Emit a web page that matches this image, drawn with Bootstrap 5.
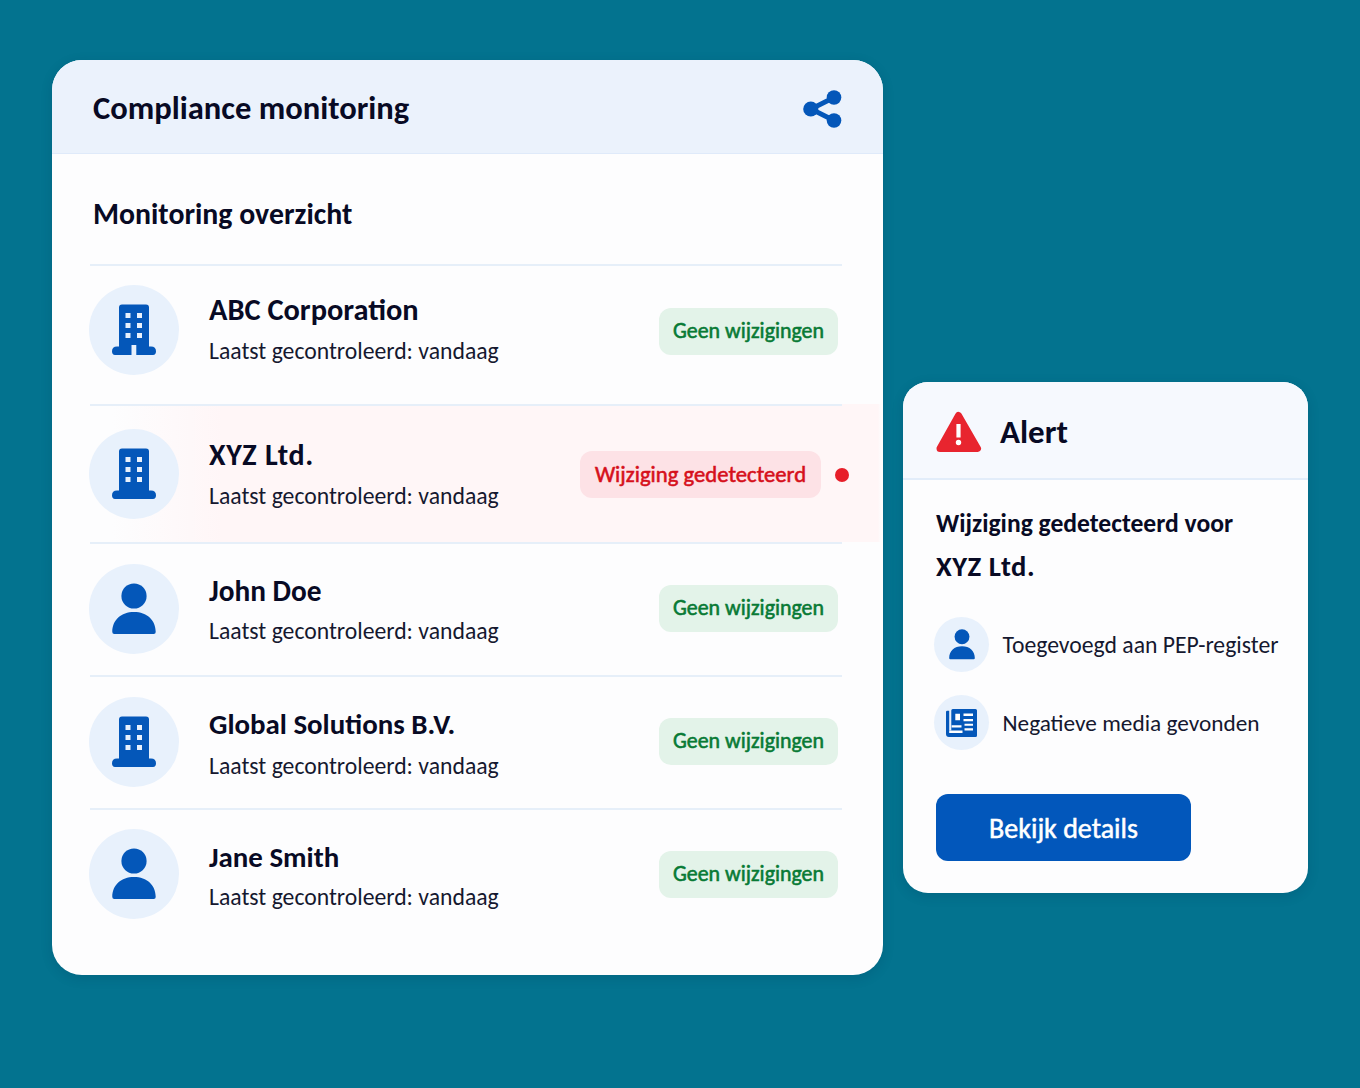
<!DOCTYPE html>
<html lang="nl">
<head>
<meta charset="utf-8">
<meta name="viewport" content="width=device-width, initial-scale=1">
<title>Compliance monitoring</title>
<link href="https://cdn.jsdelivr.net/npm/bootstrap@5.3.0/dist/css/bootstrap.min.css" rel="stylesheet">
<style>
body{background:#03738f;font-family:Carlito,Lato,sans-serif;color:#080a24;height:1088px;overflow:hidden}
.stage{padding:60px 52px 0;gap:20px}
.panel{border:0;background:#fdfdfe;overflow:hidden;box-shadow:0 3px 12px rgba(0,40,70,.16)}
.panel-main{width:831px;height:915px;border-radius:30px}
.panel-alert{width:405px;height:511px;margin-top:322px;border-radius:25px}
.panel-main .head{height:94px;padding:4px 41px 0 41px;background:#ebf2fc;border-bottom:1px solid #dfeafa}
.panel-main .head .t{padding-bottom:2px}
.panel-alert .head{height:98px;padding:4px 33px 0;background:#f6f9fe;border-bottom:2px solid #e2edfa}
.t{white-space:nowrap;margin:0;line-height:36px}
.t-title{font-size:32.6px;font-weight:700}
.t-alert{margin-left:18px;font-size:33px}
.t-sub{font-size:29.8px;font-weight:700;padding:42px 0 0 41px;height:110px}
.t-name{font-size:29.3px;font-weight:700;line-height:41px}
.t-meta{font-size:23.7px;line-height:41px;color:#15182f}
.item{padding:0 41px 0 38px}
.line{border-top:2px solid #e6eff9;height:100%;padding-right:4px}
.r1{height:140px}.r2{height:138px}.r3,.r4{height:133px}.r5{height:134px}
.r2{background:linear-gradient(90deg,rgba(255,246,247,0) 60px,#fff6f7 170px,#fff6f7 826px,rgba(255,246,247,0) 829px)}
.r1 .line{padding-bottom:8px}.r3 .line{padding-bottom:2px}.r4 .line{padding-bottom:2px}.r5 .line{padding-bottom:4px}
.r1 .disc{margin-bottom:3px}
.r1 .who{padding-bottom:3px}.r2 .who{padding-top:1px}.r3 .who{padding-top:4px}.r4 .who{padding-top:6px}.r5 .who{padding-top:5px}
.r1 .t-name{font-size:30.4px}.r2 .t-name{font-size:30px;letter-spacing:.7px}
.r3 .t-name,.r3 .t-meta,.r5 .t-name,.r5 .t-meta{line-height:39px}
.r4 .t-name,.r5 .t-name{font-size:28.9px}
.disc{width:90px;height:90px;background:#e8f1fc;margin-left:-1px;color:#0457b9}
.disc-sm{width:55px;height:55px;background:#e8f1fc;color:#0457b9}
.disc,.disc-sm{flex:none}
.who{margin-left:30px}
.pill{height:47px;border-radius:12px;font-size:21.9px;-webkit-text-stroke:.55px currentColor;white-space:nowrap}
.ok{background:#e3f3e9;color:#087a35;width:179px}
.hit{background:#fde2e6;color:#d6101b;width:241px;font-size:22.7px}
.dot{width:14px;height:14px;background:#e71e29;margin:2px -11px 0 14px}
.body-alert{padding:22px 26px 0 31px}
.t-msg{font-size:25.6px;font-weight:700;line-height:43px;padding-left:2px;margin-bottom:28px}
.t-msg .subject{font-size:28.6px;letter-spacing:.55px}
.t-fact{font-size:23.7px;color:#15182f;margin-left:13.500px}
.fact+.fact{margin-top:23px}
.fact+.fact .t-fact{font-size:23.3px}
.go{width:255px;height:67px;margin:44px 0 0 2px;padding:2px 0 0 0;border-radius:12px;background:#0257bb;border:0;color:#fff;font-size:28px;-webkit-text-stroke:.5px #fff}
</style>
</head>
<body>
<svg class="d-none">
<symbol id="office" viewBox="0 0 44 52"><path fill="currentColor" fill-rule="evenodd" d="M10 .5h24q3 0 3 3V42.500h2q5 0 5 4.800 0 3.700-3 3.700H24.300V41h-4.800v10H3q-3 0-3-3.700Q0 42.500 5 42.500h2V3.500q0-3 3-3zM13.500 9v5h5V9zM25 9v5h5V9zM13.500 19v5h5v-5zM25 19v5h5v-5zM13.500 29v5h5v-5zM25 29v5h5v-5z"/></symbol>
<symbol id="tower" viewBox="0 0 44 52"><path fill="currentColor" fill-rule="evenodd" d="M10 .5h24q3 0 3 3V42.500h2q5 0 5 4.800 0 3.700-3 3.700H3q-3 0-3-3.700Q0 42.500 5 42.500h2V3.500q0-3 3-3zM13.500 9v5h5V9zM25 9v5h5V9zM13.500 19v5h5v-5zM25 19v5h5v-5zM13.500 29v5h5v-5zM25 29v5h5v-5z"/></symbol>
<symbol id="person" viewBox="0 0 44 52"><g fill="currentColor"><circle cx="22" cy="13" r="12.600"/><path d="M.300 49C.300 37 9 29 22 29s21.700 8 21.700 20q0 2-2 2H2.300q-2 0-2-2z"/></g></symbol>
</svg>
<main class="stage d-flex align-items-start">
<section class="card panel panel-main">
  <header class="head d-flex align-items-center justify-content-between">
    <h1 class="t t-title">Compliance monitoring</h1>
    <svg width="39" height="38" viewBox="0 0 39 38" fill="#0457b9"><path d="M31 7.500 8 19l23 11.500" fill="none" stroke="#0457b9" stroke-width="4.800"/><circle cx="7.800" cy="19" r="7.600"/><circle cx="31" cy="7.500" r="7.300"/><circle cx="31" cy="30.500" r="7.300"/></svg>
  </header>
  <h2 class="t t-sub">Monitoring overzicht</h2>
  <div class="item r1"><div class="line d-flex align-items-center">
    <div class="disc rounded-circle d-flex align-items-center justify-content-center"><svg width="44" height="52"><use href="#office"/></svg></div>
    <div class="who"><h3 class="t t-name">ABC Corporation</h3><p class="t t-meta">Laatst gecontroleerd: vandaag</p></div>
    <div class="pill ok ms-auto d-flex align-items-center justify-content-center">Geen wijzigingen</div>
  </div></div>
  <div class="item r2"><div class="line d-flex align-items-center">
    <div class="disc rounded-circle d-flex align-items-center justify-content-center"><svg width="44" height="52"><use href="#tower"/></svg></div>
    <div class="who"><h3 class="t t-name">XYZ Ltd.</h3><p class="t t-meta">Laatst gecontroleerd: vandaag</p></div>
    <div class="pill hit ms-auto d-flex align-items-center justify-content-center">Wijziging gedetecteerd</div><i class="dot rounded-circle"></i>
  </div></div>
  <div class="item r3"><div class="line d-flex align-items-center">
    <div class="disc rounded-circle d-flex align-items-center justify-content-center"><svg width="44" height="52"><use href="#person"/></svg></div>
    <div class="who"><h3 class="t t-name">John Doe</h3><p class="t t-meta">Laatst gecontroleerd: vandaag</p></div>
    <div class="pill ok ms-auto d-flex align-items-center justify-content-center">Geen wijzigingen</div>
  </div></div>
  <div class="item r4"><div class="line d-flex align-items-center">
    <div class="disc rounded-circle d-flex align-items-center justify-content-center"><svg width="44" height="52"><use href="#tower"/></svg></div>
    <div class="who"><h3 class="t t-name">Global Solutions B.V.</h3><p class="t t-meta">Laatst gecontroleerd: vandaag</p></div>
    <div class="pill ok ms-auto d-flex align-items-center justify-content-center">Geen wijzigingen</div>
  </div></div>
  <div class="item r5"><div class="line d-flex align-items-center">
    <div class="disc rounded-circle d-flex align-items-center justify-content-center"><svg width="44" height="52"><use href="#person"/></svg></div>
    <div class="who"><h3 class="t t-name">Jane Smith</h3><p class="t t-meta">Laatst gecontroleerd: vandaag</p></div>
    <div class="pill ok ms-auto d-flex align-items-center justify-content-center">Geen wijzigingen</div>
  </div></div>
</section>
<aside class="card panel panel-alert">
  <header class="head d-flex align-items-center">
    <svg width="46" height="42" viewBox="0 0 46 42"><path d="M22.500 4.500 41.500 37.500H4z" fill="#e8252f" stroke="#e8252f" stroke-width="7" stroke-linejoin="round"/><path d="M22.500 13v13.500" stroke="#fff" stroke-width="4.200"/><circle cx="22.500" cy="31.500" r="2.700" fill="#fff"/></svg>
    <h2 class="t t-title t-alert">Alert</h2>
  </header>
  <div class="body-alert">
    <p class="t t-msg">Wijziging gedetecteerd voor<br><span class="subject">XYZ Ltd.</span></p>
    <div class="fact d-flex align-items-center"><div class="disc-sm rounded-circle d-flex align-items-center justify-content-center"><svg width="26" height="31"><use href="#person"/></svg></div><span class="t t-fact">Toegevoegd aan PEP-register</span></div>
    <div class="fact d-flex align-items-center"><div class="disc-sm rounded-circle d-flex align-items-center justify-content-center"><svg width="31" height="28" viewBox="0 0 31 28"><path fill="currentColor" d="M0 3q0-1.200 1.300-1.200H3.200V21.500H5.300V1.500Q5.300 0 6.800 0H29.500Q31 0 31 1.500v25q0 1.500-1.500 1.500H3Q0 28 0 25z"/><path fill="#fff" d="M9.300 4.800H14v6.400H9.300zM17.500 4.600H27V7h-9.500zM17.500 10H27v2.200h-9.500zM18.500 14.700H27v2.100h-8.500zM18.500 19.300H27v2.100h-8.500zM5.600 16.300h9.900v2.300H5.600zM3.200 21.500h13.300V24H3.200z"/></svg></div><span class="t t-fact">Negatieve media gevonden</span></div>
    <button class="btn go">Bekijk details</button>
  </div>
</aside>
</main>
<script src="https://cdn.jsdelivr.net/npm/bootstrap@5.3.0/dist/js/bootstrap.bundle.min.js"></script>
</body>
</html>
